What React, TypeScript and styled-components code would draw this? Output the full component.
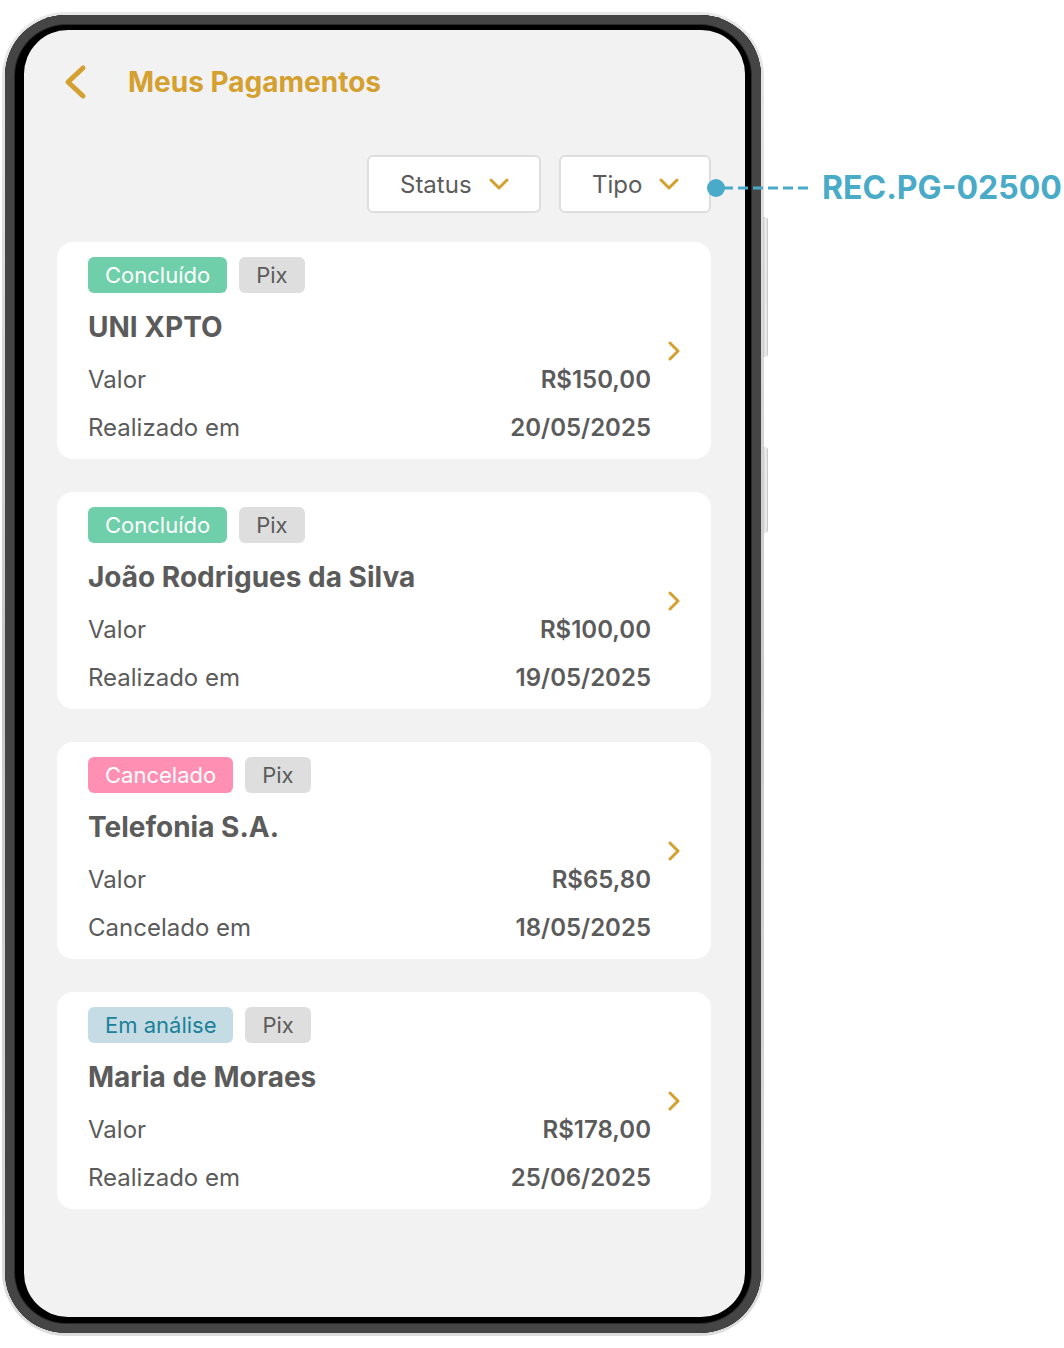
import React from "react";
import styled, { createGlobalStyle } from "styled-components";

const GOLD = "#D4A02F";
const TEXT = "#5B5B5B";
const TEAL = "#4AABC9";

const Global = createGlobalStyle`
  html, body { margin: 0; padding: 0; background: #ffffff; }
  body { font-family: Inter, "Noto Sans", sans-serif; }
  * { box-sizing: border-box; }
`;

const Page = styled.div`
  position: relative;
  width: 1064px;
  height: 1348px;
  padding: 12px 0 0 2px;
`;

const Phone = styled.div`
  position: relative;
  width: 762px;
  height: 1324px;
  border-radius: 64px;
  padding: 3px;
  background: linear-gradient(180deg, #e8e8e8 0%, #c8c8c8 50%, #dcdcdc 100%);
`;

const SideButton = styled.div<{ $top: number; $h: number }>`
  position: absolute;
  right: -4px;
  top: ${(p) => p.$top}px;
  width: 5px;
  height: ${(p) => p.$h}px;
  border-radius: 0 3px 3px 0;
  background: linear-gradient(90deg, #c8c8c8, #f4f4f4 60%, #bcbcbc);
`;

const Bezel = styled.div`
  width: 100%;
  height: 100%;
  border-radius: 61px;
  background: #000;
  padding: 15px 16px 16px 19px;
  box-shadow: inset 0 0 0 9px #454545, inset 0 0 0 10px #2a2a2a;
`;

const Screen = styled.div`
  width: 100%;
  height: 100%;
  border-radius: 44px;
  background: #f2f2f2;
  overflow: hidden;
  padding: 32px 34px 0 33px;
  display: flex;
  flex-direction: column;
`;

const Header = styled.div`
  height: 40px;
  display: flex;
  align-items: center;
  padding-left: 6px;
  gap: 41px;
`;

const Title = styled.h1`
  margin: 0;
  font-size: 28px;
  font-weight: 700;
  color: ${GOLD};
`;

const Filters = styled.div`
  margin-top: 53px;
  display: flex;
  justify-content: flex-end;
  gap: 18px;
`;

const FilterButton = styled.button<{ $w: number }>`
  width: ${(p) => p.$w}px;
  height: 58px;
  display: flex;
  align-items: center;
  justify-content: space-between;
  padding: 0 30px 0 31px;
  border: 2px solid #dedede;
  border-radius: 6px;
  background: #fff;
  font-family: Inter, sans-serif;
  font-size: 24px;
  color: ${TEXT};
`;

const List = styled.div`
  margin-top: 29px;
  display: flex;
  flex-direction: column;
  gap: 33px;
`;

const Card = styled.div`
  background: #fff;
  border-radius: 16px;
  height: 217px;
  padding: 0 30px 0 31px;
  display: flex;
  align-items: center;
  gap: 16px;
`;

const CardBody = styled.div`
  flex: 1;
  align-self: stretch;
  padding-top: 15px;
  display: flex;
  flex-direction: column;
`;

const Badges = styled.div`
  display: flex;
  gap: 12px;
`;

const badgeColors: Record<string, { bg: string; fg: string }> = {
  done: { bg: "#6FCFAA", fg: "#ffffff" },
  cancel: { bg: "#FF8FB3", fg: "#ffffff" },
  review: { bg: "#C5DCE4", fg: "#1B8199" },
  neutral: { bg: "#DEDEDE", fg: TEXT },
};

const Badge = styled.span<{ $kind: string }>`
  height: 36px;
  display: inline-flex;
  align-items: center;
  padding: 0 17px;
  border-radius: 6px;
  font-size: 22px;
  background: ${(p) => badgeColors[p.$kind].bg};
  color: ${(p) => badgeColors[p.$kind].fg};
`;

const Name = styled.div`
  margin-top: 16px;
  line-height: 36px;
  font-size: 28px;
  font-weight: 700;
  color: ${TEXT};
`;

const Details = styled.div`
  margin-top: 10px;
  display: flex;
  flex-direction: column;
`;

const Row = styled.div`
  height: 48px;
  display: flex;
  align-items: center;
  justify-content: space-between;
  font-size: 24px;
  color: ${TEXT};
`;

const Value = styled.span`
  font-weight: 600;
`;

const Callout = styled.div`
  position: absolute;
  left: 707px;
  top: 168px;
  display: flex;
  align-items: center;
  gap: 14px;
  white-space: nowrap;
`;

const CalloutLabel = styled.span`
  font-size: 32px;
  font-weight: 700;
  color: ${TEAL};
`;

const BackIcon = () => (
  <svg width="24" height="36" viewBox="0 0 24 36">
    <path d="M20 4 L5 18 L20 32" fill="none" stroke={GOLD} strokeWidth="5" strokeLinecap="round" strokeLinejoin="round" />
  </svg>
);

const DownIcon = () => (
  <svg width="20" height="12" viewBox="0 0 20 12">
    <path d="M2 2 L10 10 L18 2" fill="none" stroke={GOLD} strokeWidth="3" strokeLinecap="round" strokeLinejoin="round" />
  </svg>
);

const RightIcon = () => (
  <svg width="14" height="20" viewBox="0 0 14 20">
    <path d="M3 2 L11 10 L3 18" fill="none" stroke={GOLD} strokeWidth="3" strokeLinecap="round" strokeLinejoin="round" />
  </svg>
);

const items = [
  { status: "Concluído", kind: "done", name: "UNI XPTO", value: "R$150,00", dateLabel: "Realizado em", date: "20/05/2025" },
  { status: "Concluído", kind: "done", name: "João Rodrigues da Silva", value: "R$100,00", dateLabel: "Realizado em", date: "19/05/2025" },
  { status: "Cancelado", kind: "cancel", name: "Telefonia S.A.", value: "R$65,80", dateLabel: "Cancelado em", date: "18/05/2025" },
  { status: "Em análise", kind: "review", name: "Maria de Moraes", value: "R$178,00", dateLabel: "Realizado em", date: "25/06/2025" },
];

export default function App() {
  return (
    <Page>
      <Global />
      <Phone>
        <SideButton $top={205} $h={140} />
        <SideButton $top={435} $h={86} />
        <Bezel>
          <Screen>
            <Header>
              <BackIcon />
              <Title>Meus Pagamentos</Title>
            </Header>
            <Filters>
              <FilterButton $w={174}>
                Status
                <DownIcon />
              </FilterButton>
              <FilterButton $w={152}>
                Tipo
                <DownIcon />
              </FilterButton>
            </Filters>
            <List>
              {items.map((it) => (
                <Card key={it.name}>
                  <CardBody>
                    <Badges>
                      <Badge $kind={it.kind}>{it.status}</Badge>
                      <Badge $kind="neutral">Pix</Badge>
                    </Badges>
                    <Name>{it.name}</Name>
                    <Details>
                      <Row>
                        <span>Valor</span>
                        <Value>{it.value}</Value>
                      </Row>
                      <Row>
                        <span>{it.dateLabel}</span>
                        <Value>{it.date}</Value>
                      </Row>
                    </Details>
                  </CardBody>
                  <RightIcon />
                </Card>
              ))}
            </List>
          </Screen>
        </Bezel>
      </Phone>
      <Callout>
        <svg width="101" height="36" viewBox="0 0 101 36">
          <circle cx="9" cy="18" r="9" fill={TEAL} />
          <line x1="16" y1="18" x2="101" y2="18" stroke={TEAL} strokeWidth="3" strokeDasharray="10 5" />
        </svg>
        <CalloutLabel>REC.PG-02500</CalloutLabel>
      </Callout>
    </Page>
  );
}
